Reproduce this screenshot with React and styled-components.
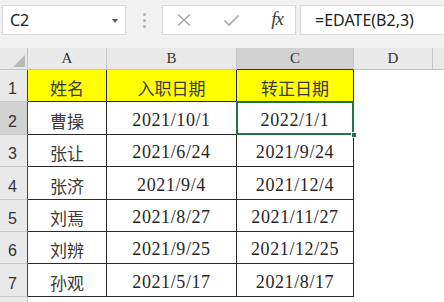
import React from "react";
import styled, { createGlobalStyle } from "styled-components";

const Global = createGlobalStyle`
  html, body { margin: 0; padding: 0; background: #ffffff; }
  body { width: 444px; height: 302px; overflow: hidden; }
  #root { width: 444px; height: 302px; }
`;

const Page = styled.div`
  width: 444px;
  height: 302px;
  overflow: hidden;
  background: #ffffff;
  display: flex;
  flex-direction: column;
`;

const Toolbar = styled.div`
  height: 48px;
  flex: none;
  box-sizing: border-box;
  background: #f1f1f1;
  padding: 5px 0 0 2px;
  display: flex;
  align-items: flex-start;
`;

const Box = styled.div`
  height: 30px;
  box-sizing: border-box;
  background: #ffffff;
  border: 1px solid #d9d9d9;
  display: flex;
  align-items: center;
`;

const NameBox = styled(Box)`
  width: 124px;
  padding: 0 7px 0 7px;
  justify-content: space-between;
  font-family: "Noto Sans", "Open Sans", sans-serif;
  font-size: 16px;
  color: #222;
`;

const Caret = styled.span`
  width: 0;
  height: 0;
  border-left: 3.5px solid transparent;
  border-right: 3.5px solid transparent;
  border-top: 4px solid #555;
  margin-top: 1px;
`;

const Grip = styled.div`
  width: 36px;
  height: 30px;
  display: flex;
  flex-direction: column;
  align-items: center;
  justify-content: center;
  gap: 3px;
`;

const Dot = styled.span`
  width: 3px;
  height: 3px;
  border-radius: 50%;
  background: #b0b0b0;
`;

const ButtonBox = styled(Box)`
  width: 134px;
  padding: 0 12px 0 13px;
  justify-content: space-between;
`;

const Fx = styled.span`
  font-family: "Liberation Serif", "DejaVu Serif", serif;
  font-style: italic;
  font-size: 19px;
  color: #3c3c3c;
  letter-spacing: -1px;
  margin-top: -3px;
`;

const FormulaBox = styled(Box)`
  flex: 1;
  margin-left: 4px;
  padding-left: 14px;
  border-right: none;
  font-family: "Noto Sans", "Open Sans", sans-serif;
  font-size: 16px;
  color: #222;
`;

const Sheet = styled.div`
  display: grid;
  grid-template-columns: 28px 79px 130px 117px 79px 60px;
  grid-template-rows: 22px 32px 33px 32px 33px 32px 32px 33px 22px;
  background: #ffffff;
`;

const ColHead = styled.div`
  box-sizing: border-box;
  background: ${(p) => (p.$active ? "#d2d2d2" : "#e9e9e9")};
  border-right: 1px solid #c4c4c4;
  border-bottom: 1px solid ${(p) => (p.$active ? "#333" : "#c4c4c4")};
  display: flex;
  align-items: flex-end;
  justify-content: center;
  padding-bottom: 2px;
  font-family: "Liberation Serif", "DejaVu Serif", serif;
  font-size: 15px;
  color: #333;
`;

const Corner = styled(ColHead)`
  position: relative;
  &::after {
    content: "";
    position: absolute;
    right: 2px;
    bottom: 2px;
    width: 0;
    height: 0;
    border-left: 12px solid transparent;
    border-bottom: 12px solid #b9b9b9;
  }
`;

const RowHead = styled.div`
  box-sizing: border-box;
  background: ${(p) => (p.$active ? "#d2d2d2" : "#e9e9e9")};
  border-right: 1px solid ${(p) => (p.$edge ? "#444" : "#c4c4c4")};
  border-bottom: 1px solid #c8c8c8;
  display: flex;
  align-items: flex-end;
  padding: 0 0 3px 8px;
  font-family: "Liberation Sans", "Noto Sans", sans-serif;
  font-size: 16px;
  color: #333;
`;

const Cell = styled.div`
  position: relative;
  box-sizing: border-box;
  background: ${(p) => (p.$head ? "#ffff00" : "#ffffff")};
  border-right: 1px solid #2a2a2a;
  border-bottom: 1px solid #2a2a2a;
  display: flex;
  align-items: center;
  justify-content: center;
  padding-top: 4px;
  font-family: ${(p) =>
    p.$date
      ? `"Liberation Serif", "Noto Sans CJK SC", serif`
      : `"Noto Sans CJK SC", "Noto Sans CJK TC", sans-serif`};
  font-size: ${(p) => (p.$date ? "18px" : "17px")};
  letter-spacing: ${(p) => (p.$date ? "0.6px" : "0px")};
  color: ${(p) => (p.$date ? "#262626" : "#3a3a3a")};
  ${(p) =>
    p.$selected &&
    `
    &::after {
      content: "";
      position: absolute;
      left: -1px;
      top: -1px;
      right: -1px;
      bottom: -1px;
      border: 2px solid #217346;
      box-sizing: border-box;
    }
    &::before {
      content: "";
      position: absolute;
      right: -4px;
      bottom: -4px;
      width: 6px;
      height: 6px;
      background: #217346;
      border: 1px solid #fff;
      box-sizing: border-box;
      z-index: 2;
    }
  `}
`;

const Empty = styled.div`
  background: #ffffff;
`;

const XIcon = () => (
  <svg width="16" height="14" viewBox="0 0 16 14">
    <path d="M2 1.5 L14 12.5 M14 1.5 L2 12.5" stroke="#a6a6a6" strokeWidth="1.6" fill="none" />
  </svg>
);

const CheckIcon = () => (
  <svg width="17" height="13" viewBox="0 0 17 13">
    <path d="M1.5 6.5 L6 11 L15.5 1.5" stroke="#a6a6a6" strokeWidth="1.6" fill="none" />
  </svg>
);

const rows = [
  ["姓名", "入职日期", "转正日期"],
  ["曹操", "2021/10/1", "2022/1/1"],
  ["张让", "2021/6/24", "2021/9/24"],
  ["张济", "2021/9/4", "2021/12/4"],
  ["刘焉", "2021/8/27", "2021/11/27"],
  ["刘辨", "2021/9/25", "2021/12/25"],
  ["孙观", "2021/5/17", "2021/8/17"],
];

export default function App() {
  return (
    <Page>
      <Global />
      <Toolbar>
        <NameBox>
          <span>C2</span>
          <Caret />
        </NameBox>
        <Grip>
          <Dot />
          <Dot />
          <Dot />
        </Grip>
        <ButtonBox>
          <XIcon />
          <CheckIcon />
          <Fx>fx</Fx>
        </ButtonBox>
        <FormulaBox>=EDATE(B2,3)</FormulaBox>
      </Toolbar>
      <Sheet>
        <Corner />
        <ColHead>A</ColHead>
        <ColHead>B</ColHead>
        <ColHead $active>C</ColHead>
        <ColHead>D</ColHead>
        <ColHead />
        {rows.map((r, i) => (
          <React.Fragment key={i}>
            <RowHead $active={i === 1} $edge>
              {i + 1}
            </RowHead>
            <Cell $head={i === 0}>{r[0]}</Cell>
            <Cell $head={i === 0} $date={i > 0}>
              {r[1]}
            </Cell>
            <Cell $head={i === 0} $date={i > 0} $selected={i === 1}>
              {r[2]}
            </Cell>
            <Empty />
            <Empty />
          </React.Fragment>
        ))}
        <RowHead />
        <Empty />
        <Empty />
        <Empty />
        <Empty />
        <Empty />
      </Sheet>
    </Page>
  );
}
